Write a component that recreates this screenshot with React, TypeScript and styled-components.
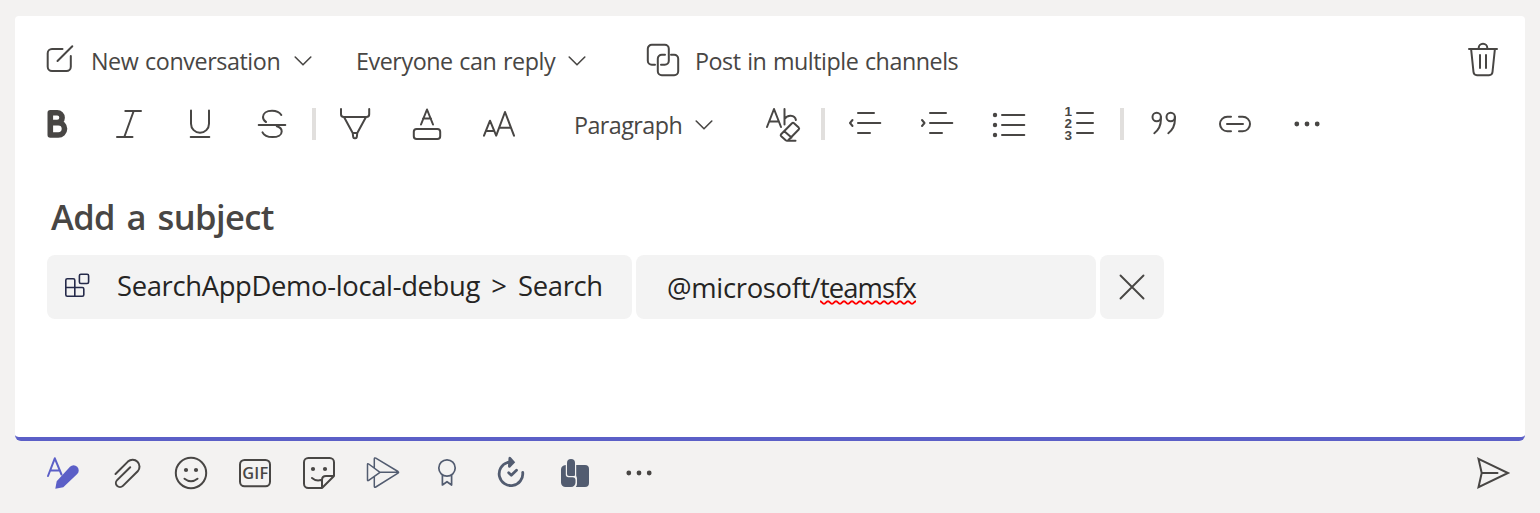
import React from "react";
import styled, { createGlobalStyle } from "styled-components";

const GlobalStyle = createGlobalStyle`
  * { box-sizing: border-box; }
  body { margin: 0; background: #f3f2f1; }
`;

const INK = "#484644";
const BRAND = "#5b5fc7";
const SLATE = "#525c70";

const Page = styled.div`
  width: 1540px;
  height: 513px;
  padding: 16px 15px 0;
  display: flex;
  flex-direction: column;
  background: #f3f2f1;
  color: ${INK};
  font-family: "Open Sans", "Noto Sans", sans-serif;
`;

const Card = styled.section`
  height: 425px;
  background: #fff;
  border-radius: 4px 4px 6px 6px;
  border-bottom: 4px solid ${BRAND};
`;

const Row = styled.div<{ $h: number; $pad: string }>`
  display: flex;
  align-items: center;
  height: ${(p) => p.$h}px;
  padding: ${(p) => p.$pad};
`;

const Spacer = styled.div`
  flex: 1;
`;

const Label = styled.span<{ $w: number; $ls: number; $ml?: number }>`
  width: ${(p) => p.$w}px;
  margin-left: ${(p) => p.$ml ?? 0}px;
  font-size: 23.3px;
  line-height: 32px;
  letter-spacing: ${(p) => p.$ls}px;
  word-spacing: 1px;
  white-space: nowrap;
  padding-top: 2px;
`;

const Slot = styled.button<{ $w?: number; $ml?: number; $color?: string }>`
  flex: none;
  display: flex;
  align-items: center;
  justify-content: center;
  width: ${(p) => p.$w ?? 40}px;
  height: 40px;
  margin: 0 0 0 ${(p) => p.$ml ?? 0}px;
  padding: 0;
  border: 0;
  background: none;
  color: ${(p) => p.$color ?? INK};
`;

const Glyph = styled.svg<{ $sw?: number }>`
  flex: none;
  display: block;
  width: 40px;
  height: 40px;
  overflow: visible;
  fill: none;
  stroke: currentColor;
  stroke-width: ${(p) => p.$sw ?? 2};
  stroke-linecap: round;
  stroke-linejoin: round;

  .solid { fill: currentColor; stroke: none; }
  text { fill: currentColor; stroke: none; font-family: "Open Sans", sans-serif; font-weight: 600; }
  .digit { font-family: "Liberation Sans", sans-serif; font-size: 13.5px; font-weight: 700; }
`;

const Divider = styled.i<{ $m: string }>`
  flex: none;
  width: 4px;
  height: 32px;
  margin: ${(p) => p.$m};
  background: #e1dfdd;
`;

const Subject = styled.h2`
  margin: 0;
  padding: 48px 0 0 36px;
  height: 111px;
  font-size: 34.5px;
  line-height: 50px;
  font-weight: 600;
  letter-spacing: -0.6px;
  word-spacing: 3.2px;
`;

const Chips = styled.div`
  display: flex;
  gap: 4px;
  padding-left: 32px;
`;

const Chip = styled.div<{ $w: number }>`
  display: flex;
  align-items: center;
  width: ${(p) => p.$w}px;
  height: 64px;
  border-radius: 8px;
  background: #f3f3f3;
  color: #252423;
  font-size: 27.4px;
  line-height: 40px;
  white-space: nowrap;
`;

const AppName = styled.span`
  margin: -2px 0 0 20px;
  letter-spacing: -0.34px;
  word-spacing: 4.6px;
`;

const Query = styled.span`
  margin-left: 31px;
  padding-top: 2px;
  letter-spacing: -0.3px;
`;

const Misspelt = styled.span`
  position: relative;
  letter-spacing: -0.9px;
`;

const Squiggle = styled.svg`
  position: absolute;
  left: 0;
  bottom: 1px;
  width: 96px;
  height: 5px;
  fill: none;
  stroke: #f00;
  stroke-width: 2;
`;

type IconProps = { sw?: number; children: React.ReactNode };
const Icon = ({ sw, children }: IconProps) => (
  <Glyph $sw={sw} viewBox="-20 -20 40 40" aria-hidden="true">
    {children}
  </Glyph>
);

type ToolProps = IconProps & { w?: number; ml?: number; color?: string; label: string };
const Tool = ({ w, ml, color, label, sw, children }: ToolProps) => (
  <Slot $w={w} $ml={ml} $color={color} aria-label={label}>
    <Icon sw={sw}>{children}</Icon>
  </Slot>
);

const Chevron = () => (
  <Icon sw={1.6}>
    <path d="M-7.8-3 0 4.8 7.8-3" />
  </Icon>
);

const Dots = () => (
  <>
    <circle className="solid" cx="-10.2" r="2.4" />
    <circle className="solid" r="2.4" />
    <circle className="solid" cx="10.2" r="2.4" />
  </>
);

export default function App() {
  return (
    <Page>
      <GlobalStyle />
      <Card>
        <Row $h={88} $pad="0 22px 0 25px">
          <Icon>
            <path d="M2.5-11H-8a4.3 4.3 0 0 0-4.3 4.3V6.7A4.3 4.3 0 0 0-8 11H6.5a4.3 4.3 0 0 0 4.3-4.3V-4M-2.5 1 12.3-13.8" />
          </Icon>
          <Label $w={192} $ml={11} $ls={-0.42}>New conversation</Label>
          <Chevron />
          <Label $w={201} $ml={33} $ls={-0.44}>Everyone can reply</Label>
          <Chevron />
          <Slot $ml={46} aria-label="Channels">
            <Icon>
              <path d="M-8 4.8h-3.2a4 4 0 0 1-4-4v-12a4 4 0 0 1 4-4h13a4 4 0 0 1 4 4V.8a4 4 0 0 1-4 4H-2" />
              <path d="M2-5.3h-3.2a4 4 0 0 0-4 4v12.5a4 4 0 0 0 4 4h12.4a4 4 0 0 0 4-4V-1.3a4 4 0 0 0-4-4H8" />
            </Icon>
          </Slot>
          <Label $w={269} $ml={12} $ls={-0.47}>Post in multiple channels</Label>
          <Spacer />
          <Tool label="Discard">
            <path d="M-14-11H14M-4.3-11.3v-.7a4.3 4.3 0 0 1 8.6 0v.7M-11.9-11-9.5 12A3.5 3.5 0 0 0-6 15.2H6A3.5 3.5 0 0 0 9.5 12L11.9-11M-3-5V8M3-5V8" />
          </Tool>
        </Row>

        <Row $h={40} $pad="0 0 0 5px">
          <Tool w={72} label="Bold" sw={5.6}>
            <path d="M-5.7-11.2H1.2a4.9 4.9 0 0 1 0 9.8H-5.7ZM-5.7-1.4H2.3a6.1 6.1 0 0 1 0 12.4H-5.7Z" />
          </Tool>
          <Tool w={72} label="Italic">
            <path d="M-2.7-13H13M5.7-13-3.7 13M-11 13H4.5" />
          </Tool>
          <Tool w={72} label="Underline">
            <path d="M-9-13.5V-.2a9 9 0 0 0 18 0V-13.5M-9.3 13H9.3" />
          </Tool>
          <Tool w={72} label="Strikethrough">
            <path d="M9.3-9C7.4-12 4-13.2 0-13.2c-5.4 0-9 2.6-9 6.3 0 2.2 1 3.8 3 4.9M-13.3.9H13.3M4.8 2.2c3.2.9 4.9 2.7 4.9 5.2 0 3.5-3.8 5.7-9.2 5.7-4.8 0-8.5-1.6-10-4.7" />
          </Tool>
          <Divider $m="0 3px 0 4px" />
          <Tool w={72} label="Highlight">
            <path d="M-14-15V-9.8q0 2.8 2.8 2.8H11.4q2.8 0 2.8-2.8V-15M-11-7-2.3 9H2.3L11-7M-2.3 9-1.8 13q.2 1.3 1.3 1.3h1q1.1 0 1.3-1.3L2.3 9" />
          </Tool>
          <Tool w={72} label="Font color">
            <path d="M-6 .5 0-14.5 6 .5M-4-5.5H4" />
            <rect x="-13.2" y="4.9" width="26.4" height="10.2" rx="2.8" />
          </Tool>
          <Tool w={72} label="Font size">
            <path d="M-15 11.7-9-3.3-2.8 11.7 6-12 15 11.7M-12.7 7H-5.3M.5 3.7H11.7" />
          </Tool>
          <Label $w={110} $ml={39} $ls={-0.55}>Paragraph</Label>
          <Chevron />
          <Tool w={72} ml={22} label="Clear formatting">
            <path d="M-15 3-8-15-1 3M-12.7-2.5H-3.3M2.5-15V.5M2.5-5C4.3-7.6 6.5-8.3 8.7-8.2c3 .2 4.8 1.8 5.2 4.2" />
            <path d="M10-.8Q11-1.7 12-.8L16.7 3.6Q17.6 4.5 16.7 5.5L6.2 16.2Q5 17.3 3.7 16.2L-.8 12.2Q-1.8 11.2-.9 10.2ZM2.3 7.2 9.5 13.6M5 16.8H13.5" />
          </Tool>
          <Divider $m="0 4px 0 3px" />
          <Tool w={72} label="Decrease indent">
            <path d="M-7-11H9M-7-1H15.3M-7 9H5M-12.5-4-15-1l2.5 3" />
          </Tool>
          <Tool w={72} label="Increase indent">
            <path d="M-7-11H9M-7-1H15.3M-7 9H5M-15-4l2.5 3-2.5 3" />
          </Tool>
          <Tool w={72} label="Bulleted list">
            <path d="M-7-9H15.3M-7 1H15.3M-7 11H15.3" />
            <circle className="solid" cx="-14" cy="-9" r="2.2" />
            <circle className="solid" cx="-14" cy="1" r="2.2" />
            <circle className="solid" cx="-14" cy="11" r="2.2" />
          </Tool>
          <Tool w={72} label="Numbered list">
            <path d="M-4-11H12M-4-1H12M-4 9H12" />
            <text className="digit" x="-16.5" y="-8.3">1</text>
            <text className="digit" x="-16.5" y="3.7">2</text>
            <text className="digit" x="-16.5" y="15.7">3</text>
          </Tool>
          <Divider $m="0 3px" />
          <Tool w={72} label="Quote">
            <circle cx="-6.3" cy="-7" r="4.2" />
            <circle cx="7.7" cy="-7" r="4.2" />
            <path d="M-2.1-7v2.5C-2.1 1-4.5 6-8.7 9.2M11.9-7v2.5C11.9 1 9.5 6 5.3 9.2" />
          </Tool>
          <Tool w={72} label="Link">
            <path d="M-4-7.3H-7.7a7.3 7.3 0 0 0 0 14.6H-4M4-7.3H7.7a7.3 7.3 0 0 1 0 14.6H4M-8 0H8" />
          </Tool>
          <Tool w={72} label="More options">
            <Dots />
          </Tool>
        </Row>

        <Subject>Add a subject</Subject>

        <Chips>
          <Chip $w={585}>
            <Slot $ml={10} $color="#252a4a" aria-label="App">
              <Icon sw={1.6}>
                <path d="M-9.7-8.3h6q1.5 0 1.5 1.5V.5H-11.2V-6.8q0-1.5 1.5-1.5ZM-11.2.5V7.7q0 1.5 1.5 1.5H5.3q1.5 0 1.5-1.5V2Q6.8.5 5.3.5H-11.2M-2.2.5v8.7" />
                <rect x="2.4" y="-12.7" width="9.2" height="9.2" rx="1.5" />
              </Icon>
            </Slot>
            <AppName>SearchAppDemo-local-debug &gt; Search</AppName>
          </Chip>
          <Chip $w={460}>
            <Query>
              @microsoft/
              <Misspelt>
                teamsfx
                <Squiggle viewBox="0 0 96 5">
                  <path d={"M0 1.2" + "c2 0 2 2.6 4 2.6s2-2.6 4-2.6".repeat(12)} />
                </Squiggle>
              </Misspelt>
            </Query>
          </Chip>
          <Chip $w={64}>
            <Tool w={64} label="Close" sw={1.9}>
              <path d="M-11.5-11.5 11.5 11.5M11.5-11.5-11.5 11.5" />
            </Tool>
          </Chip>
        </Chips>
      </Card>

      <Row $h={64} $pad="0 0 0 16px">
        <Tool w={64} label="Format" color={BRAND}>
          <path d="M-15 3-8.2-14.7-1.5 1.5M-12.5-2.5H-3.5" />
          <path className="solid" d="M-7.7 15.7-6.3 8.3 7-6.2a5 5 0 0 1 7.2 0 5 5 0 0 1 0 7.2L.3 14.2Z" />
        </Tool>
        <Tool w={64} label="Attach">
          <path d="M-11.5 1 .9-11.4a6.9 6.9 0 0 1 9.8 9.7L-4.1 12.9a4.1 4.1 0 0 1-5.8-5.8L3.2-5.7" />
        </Tool>
        <Tool w={64} label="Emoji">
          <circle r="15.2" />
          <circle className="solid" cx="-5" cy="-3" r="2.1" />
          <circle className="solid" cx="5" cy="-3" r="2.1" />
          <path d="M-6.5 5.7Q0 10.7 6.5 5.7" />
        </Tool>
        <Tool w={64} label="GIF">
          <rect x="-15" y="-13" width="30" height="26.3" rx="4.5" />
          <text x="-12.8" y="6" fontSize="16.3" textLength="26">GIF</text>
        </Tool>
        <Tool w={64} label="Sticker">
          <path d="M3 15H-10.7A4.3 4.3 0 0 1-15 10.7V-10.7A4.3 4.3 0 0 1-10.7-15H10.7A4.3 4.3 0 0 1 15-10.7V3L3 15V7q0-4 4-4h8M-7 5Q-3 8.5 2 7" />
          <circle className="solid" cx="-6" cy="-4" r="2.1" />
          <circle className="solid" cx="6" cy="-4" r="2.1" />
        </Tool>
        <Tool w={64} label="Stream" color={SLATE} sw={1.5}>
          <path d="M-15.5-8.5Q-15.5-9.8-14.3-9L-3-.7-14.3 7.4q-1.2.8-1.2-.5ZM-8.7-5.5V-14q0-1.7 1.5-.8L15-1.5q1.2.8 0 1.6L-7.2 14q-1.5.9-1.5-.8V4M-3-.7H15" />
        </Tool>
        <Tool w={64} label="Praise" color={SLATE} sw={1.7}>
          <circle cy="-5" r="8.2" />
          <path d="M-4.6 2.3V12L0 8.7 4.6 12V2.3" />
        </Tool>
        <Tool w={64} label="Updates" color={SLATE} sw={2.8}>
          <path d="M11.7-.5A11.8 11.8 0 1 1-3.5-10.5L1-11.2" />
          <path className="solid" d="M-2.5-15.2Q-1.5-17-.2-15.7L4.2-10.7-.8-5.5Q-2.5-4.7-3-6.5Z" />
          <path d="M-2.3-.2.3 2.2 5.5-2.7" />
        </Tool>
        <Tool w={64} label="Approvals" color={SLATE}>
          <path className="solid" d="M1.2-8H10a4 4 0 0 1 4 4V10a4 4 0 0 1-4 4H.8q1.2-1.5 1.2-3.5V5.5Q1.8 3.8 1.2 3Z" />
          <path className="solid" d="M-8-10A4 4 0 0 1 0-10V2.5Q-1 3-2.5 3H-6q-2 0-2-2Z" />
          <path className="solid" d="M-9.2-8V1.5q0 2.7 2.7 2.7H-2.5Q.5 4.5.5 7V9.5a4.5 4.5 0 0 1-4.5 4.5H-9.5A4.5 4.5 0 0 1-14 9.5V-3.5q0-4 4.8-4.5Z" />
        </Tool>
        <Tool w={64} label="More apps">
          <Dots />
        </Tool>
        <Spacer />
        <Tool w={64} label="Send">
          <path strokeLinejoin="miter" d="M-14.5-14.2 15 0-14.5 14.2-11.3 0ZM-11.3 0H4.5" />
        </Tool>
      </Row>
    </Page>
  );
}
